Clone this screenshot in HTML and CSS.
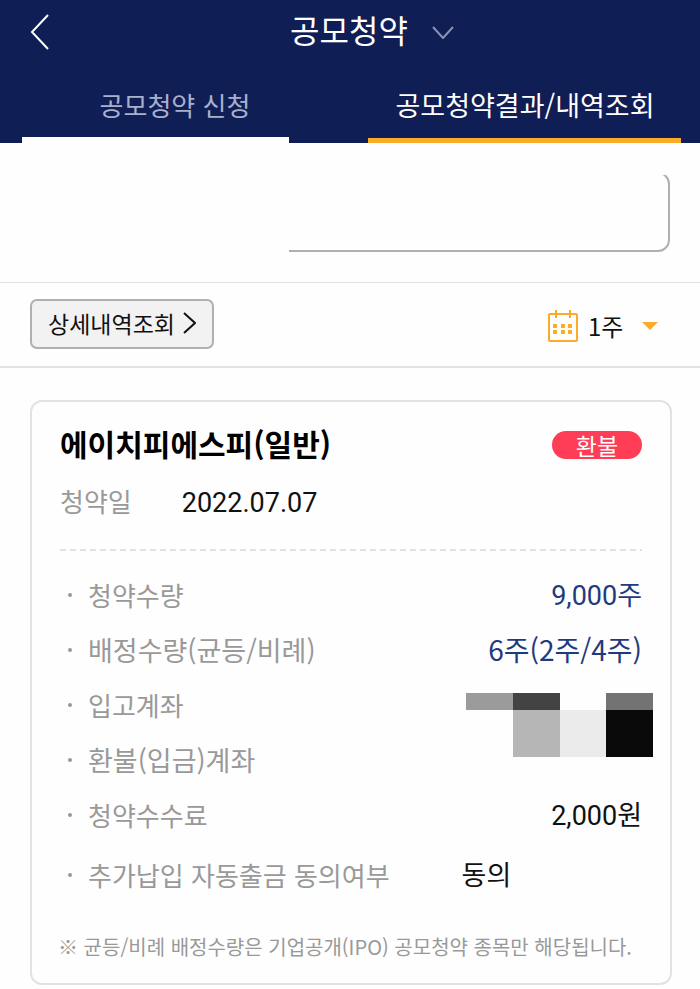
FILE: index.html
```html
<!DOCTYPE html>
<html lang="ko">
<head>
  <meta charset="UTF-8" />
  <meta name="viewport" content="width=device-width, initial-scale=1.0"/>
  <title>공모청약</title>
  <link rel="stylesheet" href="styles.css">
</head>
<body>
  <header class="header">
    <div class="title-bar">
      <button class="back-button" aria-label="뒤로">
        <svg width="20" height="36" viewBox="0 0 20 36"><path d="M18 1 L2 18 L18 35"/></svg>
      </button>
      <button class="title-button">
        <span>공모청약</span>
        <svg width="22" height="13" viewBox="0 0 22 13"><path d="M1 1 L11 12 L21 1"/></svg>
      </button>
    </div>
    <nav class="tabs">
      <a href="#apply" class="tab">공모청약 신청</a>
      <a href="#result" class="tab active">공모청약결과/내역조회</a>
    </nav>
  </header>

  <main>
    <div class="account">
      <input type="text" class="account-input" aria-label="계좌">
    </div>

    <div class="toolbar">
      <button class="detail-button">
        <span>상세내역조회</span>
        <svg width="13" height="22" viewBox="0 0 13 22"><path d="M1 1 L12 11 L1 21"/></svg>
      </button>
      <div class="period">
        <svg class="calendar" width="30" height="32" viewBox="0 0 30 32">
          <rect x="1" y="4" width="28" height="27" rx="1"/>
          <path d="M8 0 V8 M22 0 V8"/>
          <path class="dots" d="M5 14h4v4h-4z M13 14h4v4h-4z M20 14h4v4h-4z M5 20h4v4h-4z M13 20h4v4h-4z M20 20h4v4h-4z"/>
        </svg>
        <select class="period-select" aria-label="조회기간">
          <option>1주</option>
        </select>
        <svg class="arrow" width="16" height="8" viewBox="0 0 16 8"><path d="M0 0 H16 L8 8 Z"/></svg>
      </div>
    </div>

    <section class="card">
      <div class="card-head">
        <h2>에이치피에스피(일반)</h2>
        <span class="badge">환불</span>
      </div>
      <div class="date-row">
        <span class="date-label">청약일</span>
        <span>2022.07.07</span>
      </div>

      <dl class="details">
        <div class="row"><dt>청약수량</dt><dd class="blue">9,000주</dd></div>
        <div class="row"><dt class="wide">배정수량(균등/비례)</dt><dd class="blue allotted">6주(2주/4주)</dd></div>
        <div class="row">
          <dt>입고계좌</dt>
          <dd class="masked">
            <i class="gray"></i><i class="dark"></i><i></i><i class="mid"></i>
            <i></i><i class="silver"></i><i class="pale"></i><i class="black"></i>
          </dd>
        </div>
        <div class="row"><dt class="wide">환불(입금)계좌</dt></div>
        <div class="row"><dt>청약수수료</dt><dd>2,000원</dd></div>
        <div class="row consent"><dt>추가납입 자동출금 동의여부</dt><dd>동의</dd></div>
      </dl>

      <p class="note">※ 균등/비례 배정수량은 기업공개(IPO) 공모청약 종목만 해당됩니다.</p>
    </section>
  </main>
</body>
</html>
```

FILE: styles.css
```css
* {
  box-sizing: border-box;
  margin: 0;
  padding: 0;
}

:root {
  --navy: #0f1e55;
  --orange: #fbab27;
  --blue: #1f3a7d;
  --gray: #999;
  --line: #e2e2e2;
}

body {
  font-family: 'Noto Sans CJK KR', sans-serif;
  font-size: 27px;
  line-height: 36px;
  background: #fefefe;
  color: #111;
}

button,
input,
select {
  font: inherit;
  color: inherit;
  background: none;
  border: none;
}

svg {
  fill: none;
  stroke: currentColor;
  stroke-width: 2;
}

/* Header */
.header {
  background: var(--navy);
  color: #fff;
}

.title-bar {
  display: grid;
  grid-template-columns: 1fr auto 1fr;
  align-items: center;
  height: 64px;
  padding: 0 30px;
}

.back-button {
  justify-self: start;
  display: flex;
}

.title-button {
  display: flex;
  align-items: center;
  gap: 24px;
  padding-left: 44px;
  font-size: 32px;
}

.title-button span {
  padding-bottom: 6px;
}

.title-button svg {
  color: #8a91b5;
}

.tabs {
  display: grid;
  grid-template-columns: 1fr 1fr;
}

.tab {
  display: flex;
  flex-direction: column;
  justify-content: space-between;
  height: 79px;
  padding-top: 23px;
  font-size: 26px;
  color: #a9b0cd;
  text-align: center;
  text-decoration: none;
}

.tab::after {
  content: '';
  height: 6px;
  margin: 0 61px 0 22px;
  background: #fff;
}

.tab.active {
  font-size: 27px;
  color: #fff;
}

.tab.active::after {
  height: 5px;
  margin: 0 19px 0 18px;
  background: var(--orange);
}

/* Account box, only its lower right outline shows */
.account {
  padding: 29px 30px 30px;
  border-bottom: 1px solid var(--line);
}

.account-input {
  display: block;
  width: 100%;
  height: 80px;
  padding: 0 20px;
  border: 2px solid #b0b0b0;
  border-radius: 12px;
  clip-path: inset(3px 0 0 259px);
}

/* Toolbar */
.toolbar {
  display: flex;
  justify-content: space-between;
  align-items: center;
  padding: 16px 42px 17px 30px;
  border-bottom: 2px solid var(--line);
}

.detail-button {
  display: flex;
  align-items: center;
  gap: 8px;
  height: 50px;
  padding: 0 16px 3px;
  font-size: 23px;
  background: #f2f2f2;
  border: 2px solid #b0b0b0;
  border-radius: 7px;
}

.period {
  display: flex;
  align-items: center;
  padding-top: 3px;
}

.calendar {
  color: var(--orange);
}

.calendar .dots {
  fill: currentColor;
  stroke: none;
}

.period-select {
  appearance: none;
  width: 54px;
  margin-left: 10px;
  font-size: 24px;
}

.arrow path {
  fill: var(--orange);
  stroke: none;
}

/* Card */
.card {
  margin: 32px 28px 4px 30px;
  padding: 23px 28px 18px;
  border: 2px solid var(--line);
  border-radius: 12px;
}

.card-head {
  display: flex;
  justify-content: space-between;
  align-items: center;
}

.card-head h2 {
  font-size: 30px;
  line-height: 36px;
  color: #000;
}

.badge {
  width: 90px;
  height: 28px;
  margin-top: 4px;
  font-size: 23px;
  line-height: 28px;
  text-align: center;
  color: #fff;
  background: #ff3d57;
  border-radius: 14px;
}

/* Dashed rule under the date is 6px on, 4px off */
.date-row {
  display: flex;
  gap: 50px;
  margin-top: 24px;
  padding-bottom: 30px;
  font-family: Roboto, 'Noto Sans CJK KR', sans-serif;
  background: repeating-linear-gradient(to right, var(--line) 0 6px, transparent 6px 10px) bottom / 100% 2px no-repeat;
}

.date-label {
  font-size: 26px;
  color: var(--gray);
}

.details {
  padding-top: 17px;
}

.row {
  position: relative;
  display: flex;
  justify-content: space-between;
  align-items: center;
  height: 55px;
}

.row dt {
  display: flex;
  align-items: center;
  gap: 16px;
  padding: 0 0 2px 8px;
  font-size: 26px;
  color: var(--gray);
}

.row .wide {
  font-size: 27px;
}

.row dt::before {
  content: '';
  width: 4px;
  height: 4px;
  background: var(--gray);
  border-radius: 50%;
}

.row dd {
  font-family: Roboto, 'Noto Sans CJK KR', sans-serif;
}

.row .blue {
  color: var(--blue);
}

.row .allotted {
  padding-bottom: 4px;
  font-family: 'Noto Sans CJK KR', sans-serif;
  font-size: 28px;
}

.row.consent {
  justify-content: flex-start;
  gap: 72px;
  height: 65px;
}

/* Pixelated account number, lies over two rows */
.row .masked {
  position: absolute;
  top: 15px;
  right: -11px;
  display: grid;
  grid-template: 17px 47px / repeat(4, 1fr);
  width: 187px;
}

.masked .gray { background: #9b9b9b; }
.masked .dark { background: #434343; }
.masked .mid { background: #737373; }
.masked .silver { background: #b6b6b6; }
.masked .pale { background: #ebebeb; }
.masked .black { background: #0a0a0a; }

.note {
  margin: 21px -2px 0;
  font-size: 20px;
  color: var(--gray);
}
```
